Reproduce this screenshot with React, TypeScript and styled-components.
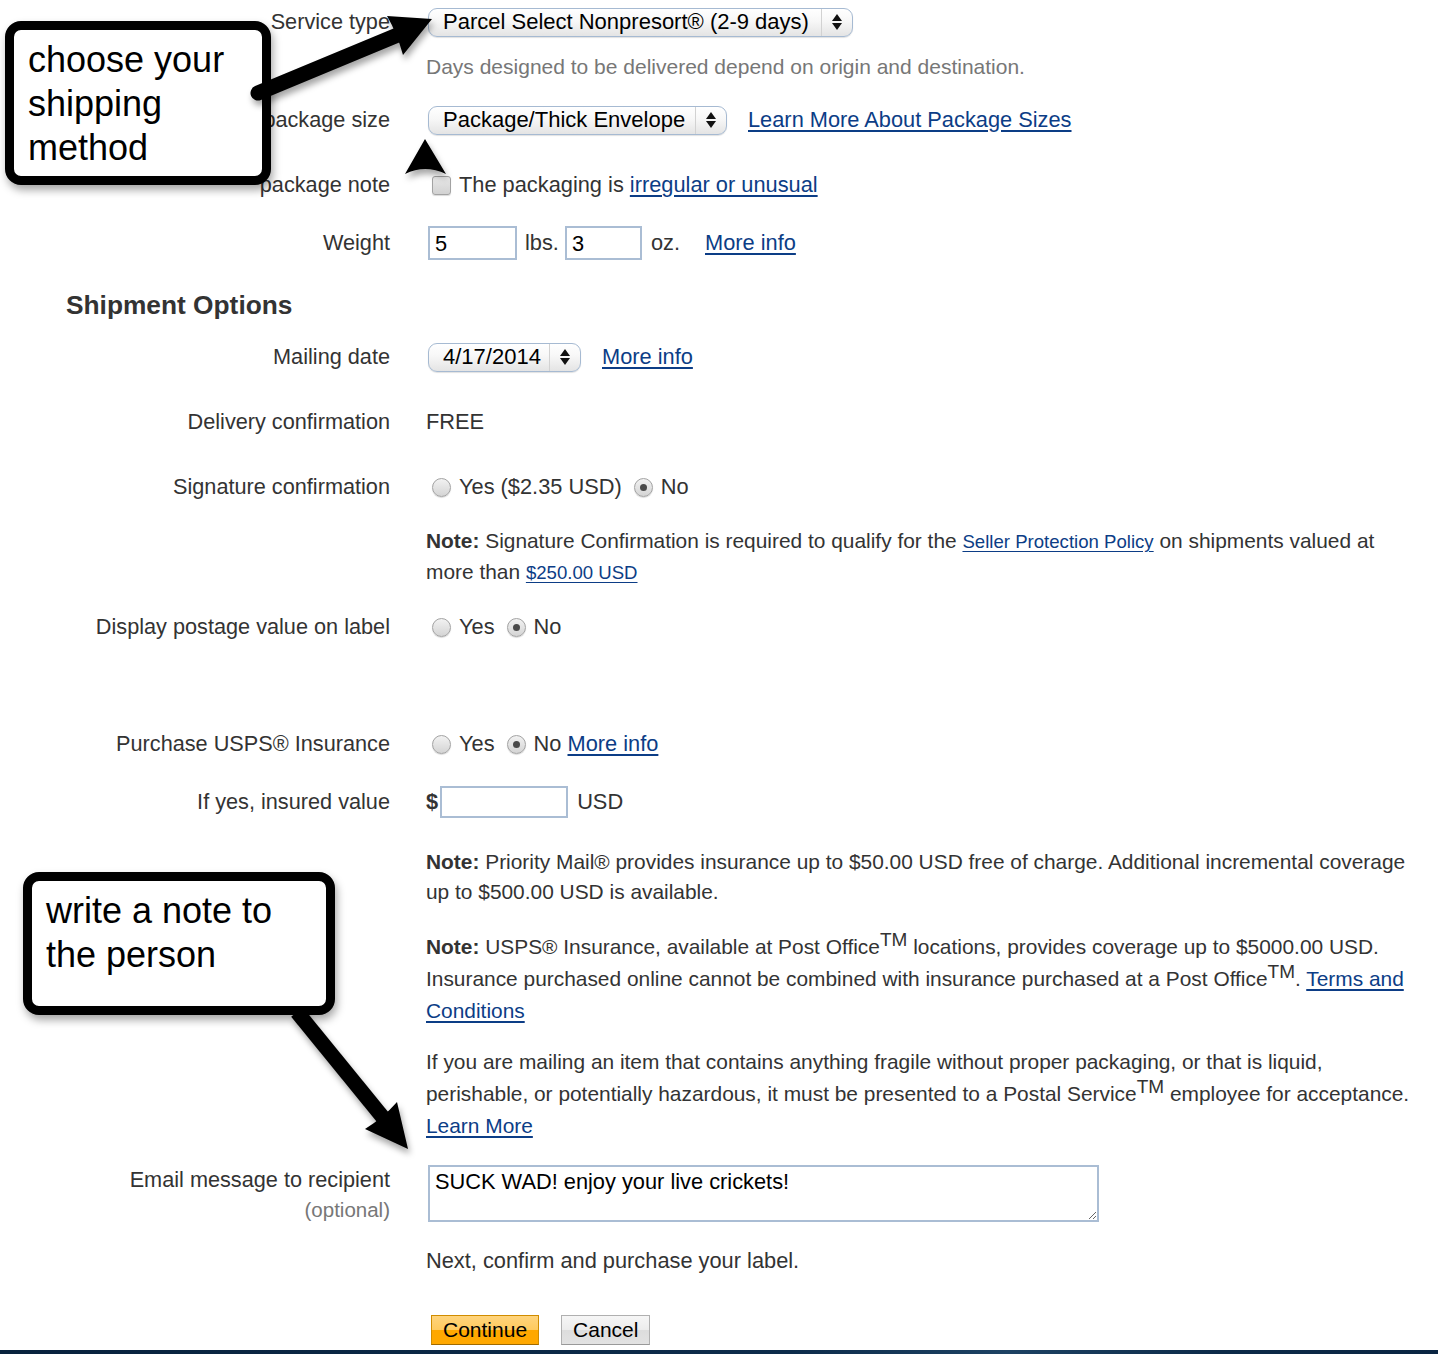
import { FC, ReactNode } from "react";
import styled, { createGlobalStyle } from "styled-components";

const GlobalStyle = createGlobalStyle`
    html, body {
        margin: 0;
        padding: 0;
        background: #fff;
    }
    body {
        font-family: "Liberation Sans", Helvetica, Arial, sans-serif;
        color: #333;
        overflow: hidden;
    }
`;

const Page = styled.div`
    position: relative;
    width: 1438px;
    min-height: 1354px;
`;

const Form = styled.div`
    padding-top: 5px;
`;

const Row = styled.div<{ $top?: number; $align?: string }>`
    display: grid;
    grid-template-columns: 390px 986px;
    column-gap: 36px;
    align-items: ${(p) => p.$align || "center"};
    min-height: 34px;
    margin-top: ${(p) => p.$top || 0}px;
`;

const Label = styled.div`
    text-align: right;
    font-size: 21.7px;
    line-height: 30px;
    color: #333;
    white-space: nowrap;
`;

const Optional = styled.div`
    color: #777;
    font-size: 20.5px;
`;

const Value = styled.div`
    display: flex;
    align-items: center;
    font-size: 21.8px;
    line-height: 30px;
    color: #333;
    white-space: nowrap;
`;

const Hint = styled.div`
    font-size: 21px;
    color: #777;
`;

const Heading = styled.h2`
    margin: 0;
    margin-top: 28px;
    padding-left: 66px;
    font-size: 26.3px;
    line-height: 34px;
    font-weight: bold;
    color: #333;
`;

const Note = styled.p<{ $lh?: number }>`
    margin: 0;
    font-size: 20.9px;
    line-height: ${(p) => p.$lh || 30}px;
    color: #333;
    b {
        color: #333;
    }
    sup {
        font-size: 19px;
        line-height: 0;
        vertical-align: 8px;
    }
`;

const Link = styled.a<{ $small?: boolean; $gap?: number }>`
    color: #0c3d86;
    text-decoration: underline;
    text-underline-offset: 3px;
    font-size: ${(p) => (p.$small ? "18.6px" : "inherit")};
    margin-left: ${(p) => p.$gap || 0}px;
    cursor: pointer;
`;

const SelectBox = styled.div<{ $w: number }>`
    display: inline-flex;
    align-items: stretch;
    box-sizing: border-box;
    width: ${(p) => p.$w}px;
    height: 29px;
    margin-left: 2px;
    border: 1.5px solid #a6bad2;
    border-radius: 9px;
    background: linear-gradient(#ffffff 0%, #f7f7f7 45%, #e4e4e4 100%);
    box-shadow: 0 1px 1px rgba(0, 0, 0, 0.12);
    color: #000;
    font-size: 22px;
    line-height: 26px;
`;

const SelectText = styled.span`
    flex: 1;
    padding-left: 14px;
    white-space: nowrap;
`;

const SelectArrows = styled.span`
    width: 30px;
    border-left: 1px solid #d2d2d2;
    display: flex;
    flex-direction: column;
    align-items: center;
    justify-content: center;
    gap: 2px;
`;

const Tri = styled.span<{ $down?: boolean }>`
    width: 0;
    height: 0;
    border-left: 5px solid transparent;
    border-right: 5px solid transparent;
    ${(p) =>
        p.$down
            ? "border-top: 7px solid #111;"
            : "border-bottom: 7px solid #111;"}
`;

const TextBox = styled.div<{ $w: number; $h?: number }>`
    box-sizing: border-box;
    width: ${(p) => p.$w}px;
    height: ${(p) => p.$h || 34}px;
    border: 2px solid #aabdd4;
    padding-left: 5px;
    color: #000;
    font-size: 21.8px;
    line-height: 32px;
    background: #fff;
`;

const Unit = styled.span<{ $l?: number; $r?: number }>`
    margin-left: ${(p) => p.$l || 0}px;
    margin-right: ${(p) => p.$r || 0}px;
`;

const Dollar = styled.b`
    margin-right: 2px;
    color: #333;
`;

const Check = styled.span`
    box-sizing: border-box;
    width: 19px;
    height: 19px;
    margin: 0 8px 0 6px;
    border: 1px solid #a3a3a3;
    border-radius: 3px;
    background: linear-gradient(#e8e8e8, #d2d2d2);
    box-shadow: 0 1px 1px rgba(0, 0, 0, 0.15);
`;

const RadioDot = styled.span<{ $on?: boolean; $l?: number }>`
    position: relative;
    box-sizing: border-box;
    width: 19px;
    height: 19px;
    margin: 0 8px 0 ${(p) => p.$l ?? 6}px;
    border: 1px solid #a3a3a3;
    border-radius: 50%;
    background: linear-gradient(#f2f2f2, #d4d4d4);
    box-shadow: 0 1px 1px rgba(0, 0, 0, 0.15);
    &::after {
        content: "";
        display: ${(p) => (p.$on ? "block" : "none")};
        position: absolute;
        left: 5px;
        top: 5px;
        width: 7px;
        height: 7px;
        border-radius: 50%;
        background: #4a4a4a;
    }
`;

const Message = styled.textarea`
    box-sizing: border-box;
    width: 671px;
    height: 57px;
    margin-left: 2px;
    border: 2px solid #aabdd4;
    padding: 2px 5px;
    font-family: "Liberation Sans", Helvetica, Arial, sans-serif;
    font-size: 21.8px;
    line-height: 26px;
    color: #000;
    outline: none;
    display: block;
`;

const Buttons = styled.div`
    display: flex;
    gap: 22px;
    padding-left: 5px;
`;

const Button = styled.button<{ $primary?: boolean }>`
    box-sizing: border-box;
    height: 30px;
    padding: 0 11px;
    font-family: "Liberation Sans", Helvetica, Arial, sans-serif;
    font-size: 21px;
    line-height: 26px;
    color: #000;
    border: 1px solid ${(p) => (p.$primary ? "#d08c00" : "#b0b0b0")};
    border-bottom-color: ${(p) => (p.$primary ? "#a06a00" : "#999")};
    background: ${(p) =>
        p.$primary
            ? "linear-gradient(#ffd47c 0%, #ffca5e 50%, #ffa800 51%, #ffa800 100%)"
            : "linear-gradient(#f6f6f6 0%, #ececec 50%, #dddddd 51%, #e2e2e2 100%)"};
    cursor: pointer;
`;

const BottomBar = styled.div`
    height: 12px;
    margin-top: 3px;
    background: linear-gradient(90deg, #08223d 0%, #0d2c4b 55%, #1d4263 70%, #0c2a48 85%, #0a2542 100%);
`;

const Callout = styled.div<{ $x: number; $y: number; $w: number; $h: number }>`
    position: absolute;
    left: ${(p) => p.$x}px;
    top: ${(p) => p.$y}px;
    width: ${(p) => p.$w}px;
    height: ${(p) => p.$h}px;
    box-sizing: border-box;
    border: 9px solid #000;
    border-radius: 16px;
    background: #fff;
    padding: 8px 0 0 14px;
    box-shadow: 2px 5px 8px rgba(0, 0, 0, 0.35);
    font-family: "Liberation Sans", Helvetica, Arial, sans-serif;
    font-size: 36px;
    line-height: 44px;
    color: #000;
`;

const Overlay = styled.svg`
    position: absolute;
    left: 0;
    top: 0;
    pointer-events: none;
`;

const Select: FC<{ w: number; children: ReactNode }> = ({ w, children }) => (
    <SelectBox $w={w}>
        <SelectText>{children}</SelectText>
        <SelectArrows>
            <Tri />
            <Tri $down />
        </SelectArrows>
    </SelectBox>
);

const Radio: FC<{ on?: boolean; l?: number; children: ReactNode }> = ({ on, l, children }) => (
    <>
        <RadioDot $on={on} $l={l} />
        <span>{children}</span>
    </>
);

export default function App() {
    return (
        <Page>
            <GlobalStyle />
            <Form>
                <Row>
                    <Label>Service type</Label>
                    <Value>
                        <Select w={425}>Parcel Select Nonpresort® (2-9 days)</Select>
                    </Value>
                </Row>
                <Row $top={11}>
                    <div />
                    <Hint>Days designed to be delivered depend on origin and destination.</Hint>
                </Row>
                <Row $top={19}>
                    <Label>package size</Label>
                    <Value>
                        <Select w={299}>Package/Thick Envelope</Select>
                        <Link $gap={21}>Learn More About Package Sizes</Link>
                    </Value>
                </Row>
                <Row $top={31}>
                    <Label>package note</Label>
                    <Value>
                        <Check />
                        The packaging is&nbsp;<Link>irregular or unusual</Link>
                    </Value>
                </Row>
                <Row $top={24}>
                    <Label>Weight</Label>
                    <Value>
                        <TextBox $w={89} style={{ marginLeft: 2 }}>5</TextBox>
                        <Unit $l={8} $r={6}>lbs.</Unit>
                        <TextBox $w={77}>3</TextBox>
                        <Unit $l={9}>oz.</Unit>
                        <Link $gap={25}>More info</Link>
                    </Value>
                </Row>

                <Heading>Shipment Options</Heading>

                <Row $top={18}>
                    <Label>Mailing date</Label>
                    <Value>
                        <Select w={153}>4/17/2014</Select>
                        <Link $gap={21}>More info</Link>
                    </Value>
                </Row>
                <Row $top={31}>
                    <Label>Delivery confirmation</Label>
                    <Value>FREE</Value>
                </Row>
                <Row $top={31}>
                    <Label>Signature confirmation</Label>
                    <Value>
                        <Radio>Yes ($2.35 USD)</Radio>
                        <Radio on l={12}>No</Radio>
                    </Value>
                </Row>
                <Row $top={22}>
                    <div />
                    <Note>
                        <b>Note:</b> Signature Confirmation is required to qualify for the{" "}
                        <Link $small>Seller Protection Policy</Link> on shipments valued at more than{" "}
                        <Link $small>$250.00 USD</Link>
                    </Note>
                </Row>
                <Row $top={22}>
                    <Label>Display postage value on label</Label>
                    <Value>
                        <Radio>Yes</Radio>
                        <Radio on l={12}>No</Radio>
                    </Value>
                </Row>
                <Row $top={83}>
                    <Label>Purchase USPS® Insurance</Label>
                    <Value>
                        <Radio>Yes</Radio>
                        <Radio on l={12}>No</Radio>
                        &nbsp;<Link>More info</Link>
                    </Value>
                </Row>
                <Row $top={24}>
                    <Label>If yes, insured value</Label>
                    <Value>
                        <Dollar>$</Dollar>
                        <TextBox $w={128} $h={32} />
                        <Unit $l={9}>USD</Unit>
                    </Value>
                </Row>
                <Row $top={28}>
                    <div />
                    <Note>
                        <b>Note:</b> Priority Mail® provides insurance up to $50.00 USD free of charge.
                        Additional incremental coverage up to $500.00 USD is available.
                    </Note>
                </Row>
                <Row $top={24}>
                    <div />
                    <Note $lh={32}>
                        <b>Note:</b> USPS® Insurance, available at Post Office<sup>TM</sup> locations,
                        provides coverage up to $5000.00 USD. Insurance purchased online cannot be combined
                        with insurance purchased at a Post Office<sup>TM</sup>. <Link>Terms and Conditions</Link>
                    </Note>
                </Row>
                <Row $top={19}>
                    <div />
                    <Note $lh={32}>
                        If you are mailing an item that contains anything fragile without proper packaging,
                        or that is liquid, perishable, or potentially hazardous, it must be presented to a
                        Postal Service<sup>TM</sup> employee for acceptance. <Link>Learn More</Link>
                    </Note>
                </Row>
                <Row $top={23} $align="start">
                    <Label>
                        Email message to recipient
                        <Optional>(optional)</Optional>
                    </Label>
                    <div>
                        <Message defaultValue="SUCK WAD! enjoy your live crickets!" />
                    </div>
                </Row>
                <Row $top={19}>
                    <div />
                    <Value>Next, confirm and purchase your label.</Value>
                </Row>
                <Row $top={35}>
                    <div />
                    <Buttons>
                        <Button $primary>Continue</Button>
                        <Button>Cancel</Button>
                    </Buttons>
                </Row>
            </Form>
            <BottomBar />

            <Callout $x={5} $y={21} $w={266} $h={164}>
                choose your
                <br />
                shipping
                <br />
                method
            </Callout>
            <Callout $x={23} $y={872} $w={312} $h={143}>
                write a note to
                <br />
                the person
            </Callout>

            <Overlay width="1438" height="1354" viewBox="0 0 1438 1354">
                <defs>
                    <filter id="sh" x="-20%" y="-20%" width="140%" height="140%">
                        <feDropShadow dx="2" dy="5" stdDeviation="3" floodColor="#000" floodOpacity="0.35" />
                    </filter>
                </defs>
                <g filter="url(#sh)" fill="#000">
                    <line x1="258" y1="93" x2="400" y2="34" stroke="#000" strokeWidth="15" strokeLinecap="round" />
                    <path d="M432 19 L387 16 Q397 33 403 55 Z" />
                    <path d="M425 139 L446 174 Q425 164 405 174 Z" />
                    <line x1="297" y1="1012" x2="385" y2="1120" stroke="#000" strokeWidth="15" />
                    <path d="M408 1149 L365 1129 Q383 1118 397 1102 Z" />
                </g>
            </Overlay>
        </Page>
    );
}
